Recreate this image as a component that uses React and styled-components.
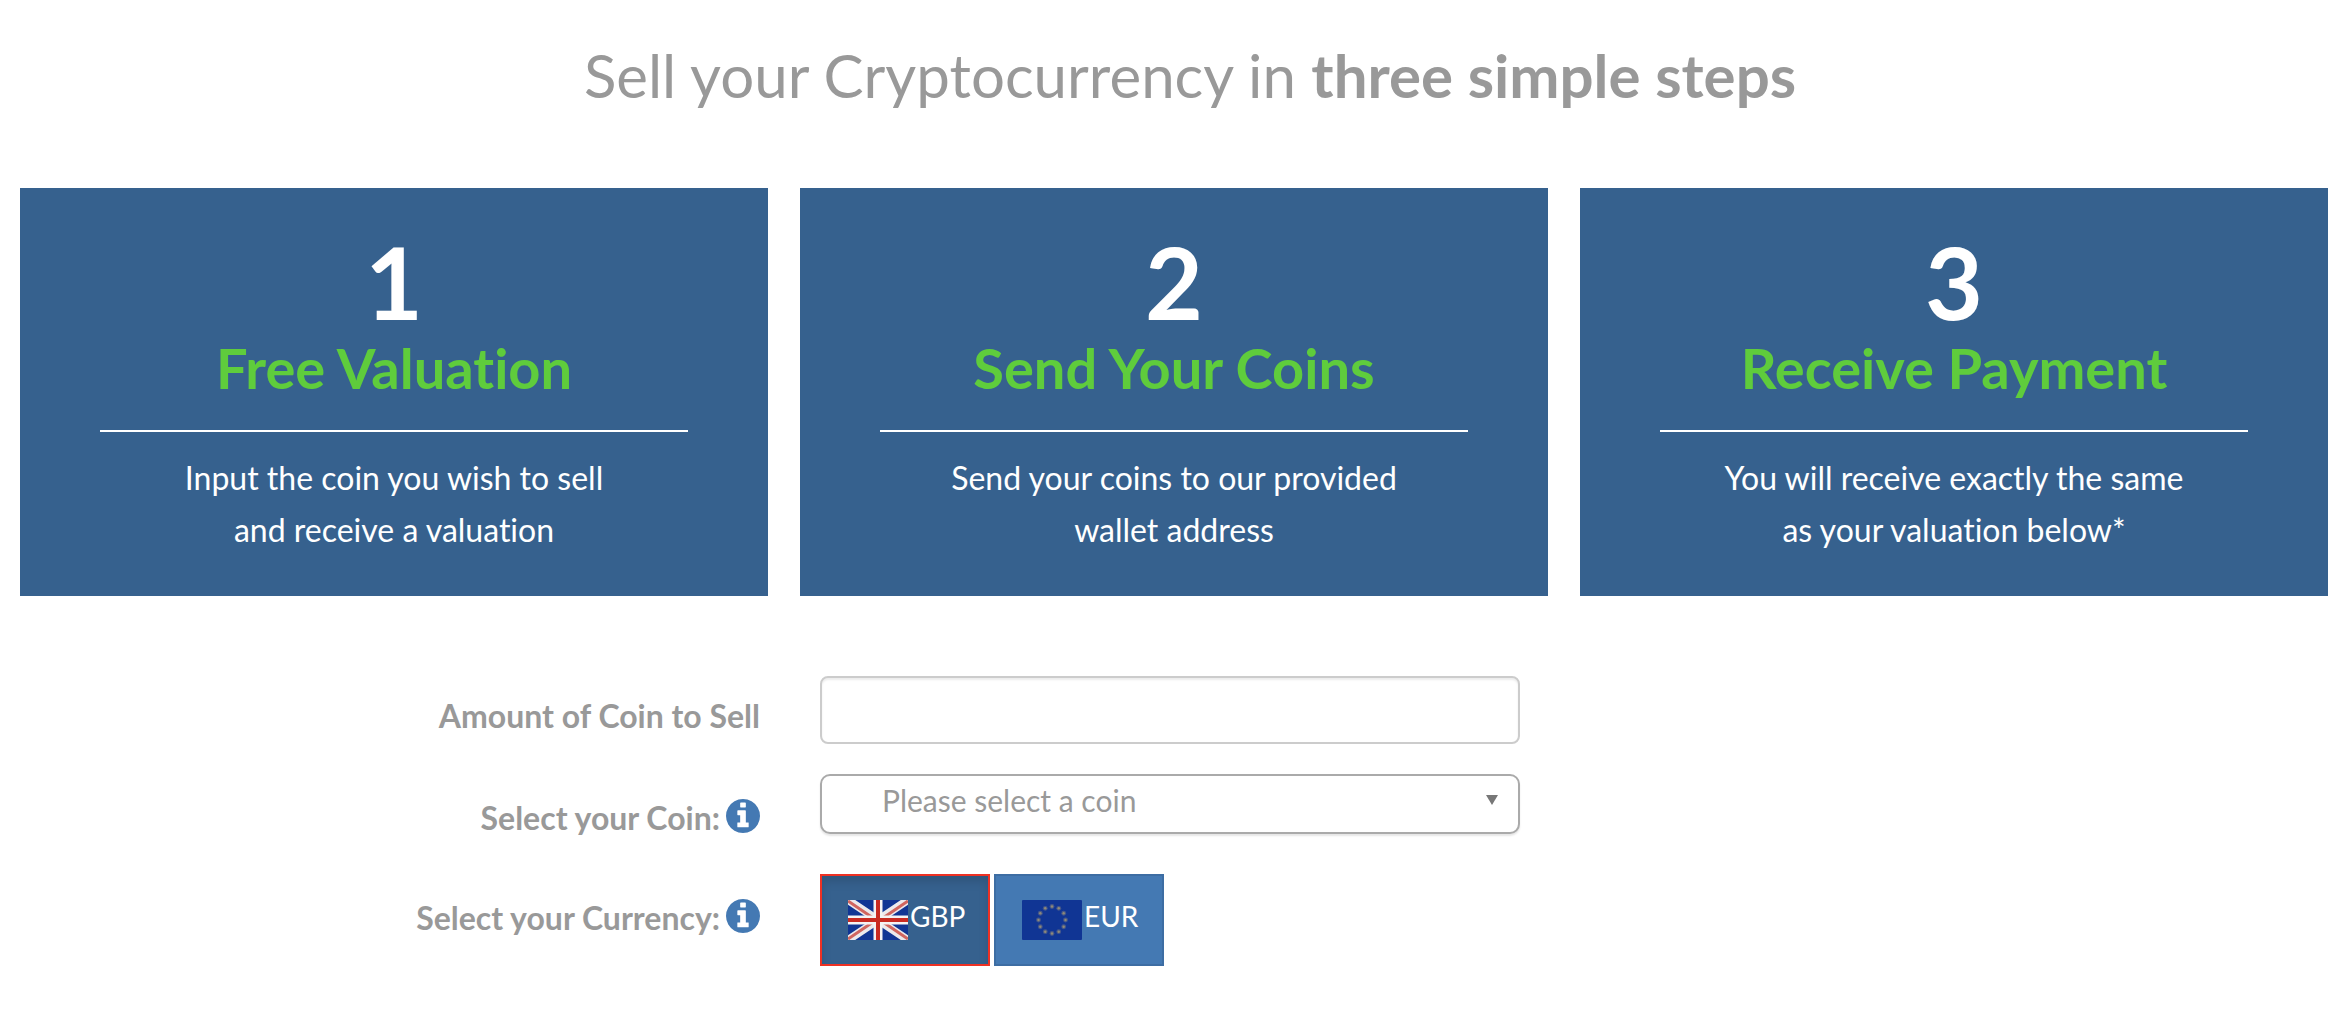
import React, { useState } from "react";
import styled, { createGlobalStyle } from "styled-components";

const GlobalStyle = createGlobalStyle`
  *, *::before, *::after { box-sizing: border-box; }
  body {
    margin: 0;
    background: #fff;
    color: #999;
    font-family: Lato, "Liberation Sans", sans-serif;
    font-variant-ligatures: none;
  }
`;

const Page = styled.main`
  padding: 39px 18px 70px 20px;
`;

const Title = styled.h1`
  margin: 0 0 77px;
  padding-left: 32px;
  font-size: 60px;
  line-height: 72px;
  font-weight: 400;
  text-align: center;
`;

const Steps = styled.section`
  display: grid;
  grid-template-columns: repeat(3, 1fr);
  gap: 32px;
`;

const Card = styled.article`
  padding: 38px 80px 40px;
  background: #36618e;
  color: #fff;
  text-align: center;
`;

const StepNumber = styled.div`
  font-size: 100px;
  line-height: 110px;
  font-weight: 700;
`;

const StepTitle = styled.h2`
  margin: 0;
  color: #5fcc3c;
  font-size: 56px;
  line-height: 64px;
  font-weight: 700;
`;

const Rule = styled.hr`
  height: 2px;
  margin: 30px 0 20px;
  border: 0;
  background: #fff;
`;

const StepText = styled.p`
  margin: 0;
  font-size: 32px;
  line-height: 52px;
`;

const Form = styled.form`
  padding-top: 80px;
`;

const Row = styled.div`
  display: grid;
  grid-template-columns: 740fr 700fr 748fr;
  column-gap: 60px;
  align-items: start;
  margin-bottom: ${(p) => p.$gap}px;
`;

const Label = styled.label`
  display: flex;
  justify-content: flex-end;
  align-items: center;
  gap: 6px;
  padding-top: ${(p) => (p.$hint ? 22 : 18)}px;
  font-size: 32px;
  line-height: 44px;
  font-weight: 700;
`;

const InfoSvg = styled.svg`
  width: 34px;
  height: 34px;
  margin-bottom: 4px;
  fill: #4479b3;
`;

const AmountInput = styled.input`
  width: 100%;
  height: 68px;
  padding: 12px 24px;
  border: 2px solid #ccc;
  border-radius: 8px;
  background: #fff;
  box-shadow: inset 0 2px 2px rgba(0, 0, 0, 0.075);
  color: #555;
  font: inherit;
  font-size: 30px;
`;

const SelectBox = styled.div`
  position: relative;
`;

const CoinSelect = styled.select`
  display: block;
  width: 100%;
  height: 60px;
  padding: 0 60px 8px 60px;
  appearance: none;
  border: 2px solid #aaa;
  border-radius: 10px;
  background: #fff;
  box-shadow: 0 2px 2px rgba(0, 0, 0, 0.1);
  color: #999;
  font: inherit;
  font-size: 30px;
`;

const Caret = styled.svg`
  position: absolute;
  top: 21px;
  right: 22px;
  width: 12px;
  height: 10px;
  fill: #777;
  pointer-events: none;
`;

const Currencies = styled.div`
  display: flex;
  gap: 4px;
`;

const CurrencyButton = styled.button`
  display: flex;
  align-items: center;
  gap: 2px;
  width: 170px;
  height: 92px;
  padding: 0 0 0 26px;
  border: 2px solid ${(p) => (p.$active ? "#ee3124" : "#3d6da3")};
  background: ${(p) => (p.$active ? "#36618e" : "#4479b3")};
  box-shadow: ${(p) => (p.$active ? "inset 0 6px 10px rgba(0, 0, 0, 0.125)" : "none")};
  color: #fff;
  font: inherit;
  font-size: 28px;
  line-height: 36px;
  cursor: pointer;
`;

const CurrencyCode = styled.span`
  padding-bottom: 8px;
`;

const Flag = styled.svg`
  width: 60px;
  height: 40px;
  flex: none;
`;

function InfoIcon() {
  return (
    <InfoSvg viewBox="128 128 1536 1536" aria-hidden="true">
      <path d="M1152 1376v-160q0-14-9-23t-23-9h-96v-512q0-14-9-23t-23-9h-320q-14 0-23 9t-9 23v160q0 14 9 23t23 9h96v320h-96q-14 0-23 9t-9 23v160q0 14 9 23t23 9h448q14 0 23-9t9-23zm-128-896v-160q0-14-9-23t-23-9h-192q-14 0-23 9t-9 23v160q0 14 9 23t23 9h192q14 0 23-9t9-23zm640 416q0 209-103 385.5t-279.5 279.5-385.5 103-385.5-103-279.5-279.5-103-385.5 103-385.5 279.5-279.5 385.5-103 385.5 103 279.5 279.5 103 385.5z" />
    </InfoSvg>
  );
}

function BritishFlag() {
  return (
    <Flag viewBox="0 0 60 40" aria-hidden="true">
      <rect width="60" height="40" fill="#103594" />
      <path d="M0 0L60 40M60 0L0 40" stroke="#ebe9ec" strokeWidth="8" />
      <path d="M0 1L28 20M60 1L32 20M0 39L28 20M60 39L32 20" stroke="#d0655f" strokeWidth="3" />
      <path d="M30 0V40M0 20H60" stroke="#f4f2f3" strokeWidth="9" />
      <path d="M30 0V40M0 20H60" stroke="#c92a22" strokeWidth="4" />
    </Flag>
  );
}

function EuropeanFlag() {
  const stars = Array.from({ length: 12 }, (_, i) => {
    const angle = (i * Math.PI) / 6;
    return [30 + 13.5 * Math.sin(angle), 20 - 13.5 * Math.cos(angle)];
  });
  return (
    <Flag viewBox="0 0 60 40" aria-hidden="true">
      <rect width="60" height="40" rx="1" fill="#103594" />
      {stars.map(([cx, cy], i) => (
        <g key={i}>
          <circle cx={cx} cy={cy} r="2.4" fill="#47598a" />
          <circle cx={cx} cy={cy} r="1.2" fill="#8f8a78" />
        </g>
      ))}
    </Flag>
  );
}

const steps = [
  { title: "Free Valuation", lines: ["Input the coin you wish to sell", "and receive a valuation"] },
  { title: "Send Your Coins", lines: ["Send your coins to our provided", "wallet address"] },
  { title: "Receive Payment", lines: ["You will receive exactly the same", "as your valuation below*"] },
];

const currencies = [
  { code: "GBP", Icon: BritishFlag },
  { code: "EUR", Icon: EuropeanFlag },
];

export default function App() {
  const [currency, setCurrency] = useState("GBP");

  return (
    <>
      <GlobalStyle />
      <Page>
        <Title>
          Sell your Cryptocurrency in <strong>three simple steps</strong>
        </Title>
        <Steps>
          {steps.map((step, i) => (
            <Card key={step.title}>
              <StepNumber>{i + 1}</StepNumber>
              <StepTitle>{step.title}</StepTitle>
              <Rule />
              <StepText>
                {step.lines[0]}
                <br />
                {step.lines[1]}
              </StepText>
            </Card>
          ))}
        </Steps>
        <Form onSubmit={(e) => e.preventDefault()}>
          <Row $gap={30}>
            <Label htmlFor="amount">Amount of Coin to Sell</Label>
            <AmountInput id="amount" type="text" inputMode="decimal" />
          </Row>
          <Row $gap={34}>
            <Label htmlFor="coin" $hint>
              Select your Coin: <InfoIcon />
            </Label>
            <SelectBox>
              <CoinSelect id="coin" defaultValue="">
                <option value="">Please select a coin</option>
              </CoinSelect>
              <Caret viewBox="0 0 12 10" aria-hidden="true">
                <path d="M0 0H12L6 10Z" />
              </Caret>
            </SelectBox>
          </Row>
          <Row $gap={0}>
            <Label as="div" id="currency-label" $hint>
              Select your Currency: <InfoIcon />
            </Label>
            <Currencies role="group" aria-labelledby="currency-label">
              {currencies.map(({ code, Icon }) => (
                <CurrencyButton
                  key={code}
                  type="button"
                  $active={code === currency}
                  aria-pressed={code === currency}
                  onClick={() => setCurrency(code)}
                >
                  <Icon />
                  <CurrencyCode>{code}</CurrencyCode>
                </CurrencyButton>
              ))}
            </Currencies>
          </Row>
        </Form>
      </Page>
    </>
  );
}
